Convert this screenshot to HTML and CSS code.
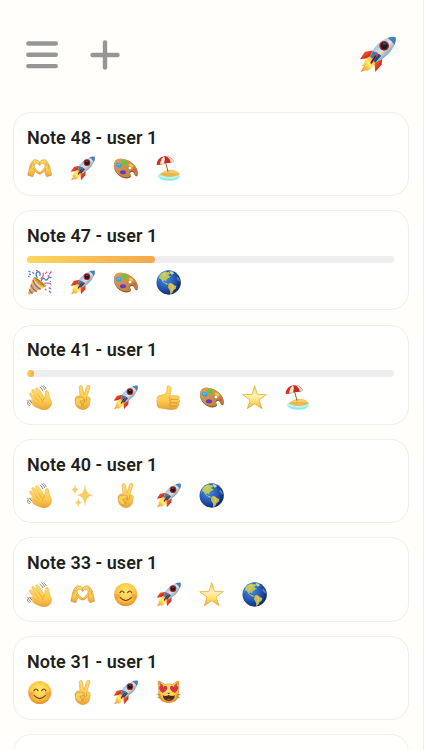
FILE: index.html
```html
<!DOCTYPE html>
<html lang="en">
<head>
<meta charset="utf-8">
<meta name="viewport" content="width=device-width, initial-scale=1">
<title>Notes</title>
<link rel="stylesheet" href="styles.css">
</head>
<body>
<svg class="sprite" width="0" height="0" aria-hidden="true">
  <defs>
    <linearGradient id="skin" x1="0" y1="0" x2="0" y2="1"><stop offset="0" stop-color="#ffdf66"/><stop offset=".6" stop-color="#fdcc50"/><stop offset="1" stop-color="#e9a237"/></linearGradient>
    <radialGradient id="face" cx=".5" cy=".38" r=".62"><stop offset="0" stop-color="#ffea72"/><stop offset=".65" stop-color="#fcc845"/><stop offset="1" stop-color="#e88b25"/></radialGradient>
    <linearGradient id="hull" x1="0" y1="0" x2="1" y2="1"><stop offset="0" stop-color="#3d78b8"/><stop offset=".3" stop-color="#9dc9ed"/><stop offset=".5" stop-color="#dce6e9"/><stop offset=".72" stop-color="#7796b4"/><stop offset="1" stop-color="#173d6c"/></linearGradient>
    <linearGradient id="fin" x1="0" y1="0" x2="1" y2="1"><stop offset="0" stop-color="#f77442"/><stop offset=".5" stop-color="#e33a20"/><stop offset="1" stop-color="#98190f"/></linearGradient>
    <linearGradient id="flame" x1="1" y1="0" x2="0" y2="1"><stop offset="0" stop-color="#f79a1e"/><stop offset=".45" stop-color="#fff06a"/><stop offset="1" stop-color="#f07c28"/></linearGradient>
    <radialGradient id="ocean" cx=".36" cy=".35" r=".66"><stop offset="0" stop-color="#4b8de0"/><stop offset=".6" stop-color="#2358b4"/><stop offset="1" stop-color="#122c70"/></radialGradient>
    <linearGradient id="gold" x1="0" y1="0" x2="0" y2="1"><stop offset="0" stop-color="#ffc843"/><stop offset=".4" stop-color="#fff3bb"/><stop offset=".7" stop-color="#ffdf6d"/><stop offset="1" stop-color="#f5a72c"/></linearGradient>
    <linearGradient id="wood" x1="0" y1="0" x2="1" y2="1"><stop offset="0" stop-color="#dca458"/><stop offset="1" stop-color="#bb7a3a"/></linearGradient>
  </defs>

  <symbol id="rocket" viewBox="0 0 75 75">
    <path d="M30 29 12 32 2 47 24 44Z" fill="url(#fin)"/>
    <path d="M47 46 46 58 33 73 31 54Z" fill="url(#fin)"/>
    <path d="M22 41 Q10 46 10 56 L5 61 10 61 3 73 15 69 15 72 27 65 34 51Z" fill="url(#flame)"/>
    <path d="M23 41 Q29 21 46 10 Q59 1 74 2 Q76 15 65 30 Q53 46 33 54Z" fill="url(#hull)"/>
    <path d="M58 4 Q66 1 74 2 Q76 9 72 18 Q66 9 58 4Z" fill="#487eb9"/>
    <path d="M28 31 23 43 28 46 38 34Z" fill="#3f7bb8"/>
    <path d="M40 36 45 40 33 54 29 49Z" fill="#244d7c"/>
    <path d="M38 35 24 56" stroke="#c4432b" stroke-width="4"/>
    <path d="M34 40 25 54" stroke="#4c211f" stroke-width="3"/>
    <circle cx="51" cy="20" r="10" fill="#c8261b"/>
    <circle cx="51" cy="20" r="7.3" fill="#141b26"/>
    <path d="M48 17 Q51 14 55 17" stroke="#67788a" stroke-width="2" fill="none"/>
    <path d="M39 34 48 35" stroke="#f3d16e" stroke-width="2"/>
  </symbol>

  <symbol id="hearthands" viewBox="0 0 75 75">
    <g id="half-heart">
      <path d="M3 53 Q7 43 7 34 Q10 22 18 14 Q22 9 28 12 Q35 12 38 19 L38 28 Q31 19 25 22 Q19 27 23 35 Q28 43 38 50 L38 54 Q31 53 26 48 L22 43 Q24 52 17 62 L3 58Z" fill="url(#skin)" stroke="#d58f30" stroke-width="1.9"/>
      <path d="M14 24 Q11 30 12 38M20 17 Q17 21 18 28M19 36 22 43" fill="none" stroke="#cf8930" stroke-width="1.8"/>
    </g>
    <use href="#half-heart" transform="matrix(-1 0 0 1 76 0)"/>
  </symbol>

  <symbol id="palette" viewBox="0 0 75 75">
    <path d="M4 21 Q8 7 28 9 Q50 12 64 28 Q76 41 74 57 Q73 62 68 60 Q65 59 63 52 Q59 43 52 50 Q49 53 53 57 Q57 65 45 67 Q27 69 12 53 Q-1 37 4 21Z" fill="#8a552a"/>
    <path d="M4 20 Q9 6 28 8 Q50 11 64 27 Q75 40 74 54 Q71 60 67 56 Q64 54 63 48 Q58 40 51 47 Q48 50 52 55 Q56 62 44 64 Q26 65 12 50 Q0 35 4 20Z" fill="url(#wood)"/>
    <circle cx="51" cy="36" r="5.5" fill="#fffefa" stroke="#774820" stroke-width="1"/>
    <ellipse cx="17" cy="28" rx="9" ry="7" fill="#38a3e3" transform="rotate(25 17 28)"/>
    <ellipse cx="33" cy="19" rx="8" ry="7" fill="#5fc440"/>
    <ellipse cx="54" cy="28" rx="8" ry="4" fill="#e8cf3a" transform="rotate(30 54 28)"/>
    <ellipse cx="30" cy="49" rx="9" ry="6" fill="#6c36c4"/>
    <ellipse cx="66" cy="43" rx="7" ry="3.5" fill="#e8544c" transform="rotate(45 66 43)"/>
    <path d="M12 27 Q16 23 21 27M29 18 32 16" stroke="#9bd6ec" stroke-width="2" fill="none"/>
  </symbol>

  <symbol id="beach" viewBox="0 0 75 75">
    <ellipse cx="39" cy="61" rx="34" ry="12" fill="#b6f4f0"/>
    <path d="M8 62 Q24 70 52 68 L70 62 Q65 74 40 74 Q15 74 8 62Z" fill="#8beaec"/>
    <path d="M10 55 Q24 43 43 41 Q64 42 72 55 Q58 63 37 63 Q21 62 10 55Z" fill="#edb64c"/>
    <path d="M17 51 Q31 43 47 43 Q63 46 68 53 Q47 48 17 51Z" fill="#f6cf6f"/>
    <path d="M27 12 36 47" stroke="#8f622e" stroke-width="3"/>
    <path d="M2 27 Q3 4 25 1 Q46 -2 54 17 L42 20 29 21 15 26Z" fill="#d82e29"/>
    <path d="M13 26 Q13 8 25 1 Q28 8 25 22Z" fill="#fff3d7"/>
    <path d="M29 1 Q41 5 44 19 L54 17 Q46 1 29 1Z" fill="#e9dcc5"/>
    <path d="M25 1 Q38 6 44 20 L25 22 Q30 9 25 1Z" fill="#c92624"/>
  </symbol>

  <symbol id="party" viewBox="0 0 75 75">
    <path d="M20 21 3 70 Q5 76 11 73 L57 48Z" fill="#e9b740"/>
    <path d="M21 25 16 38 Q25 53 39 58 L49 53 Q29 42 21 25Z" fill="#f6d269"/>
    <path d="M18 30 Q22 48 41 58M12 44 Q16 58 29 65M7 58 Q8 65 17 70" fill="none" stroke="#8a5fc4" stroke-width="4"/>
    <path d="M20 20 Q36 25 58 47 Q54 53 44 47 Q25 39 20 20Z" fill="#d39a3c"/>
    <path d="M25 24 Q42 35 50 47" stroke="#9a6a32" stroke-width="3" fill="none"/>
    <path d="M31 24 Q22 9 34 5 Q42 8 38 18M43 33 Q45 20 53 27 Q58 35 63 25 Q67 20 73 24" fill="none" stroke="#4776c9" stroke-width="4"/>
    <path d="M41 27 Q52 17 48 8M52 40 Q64 37 73 43M60 5 55 12M67 13 73 4" fill="none" stroke="#df4b84" stroke-width="3.5"/>
    <path d="M3 3 11 6M6 12 12 14M16 6 21 12M65 53 73 57" stroke="#5792d6" stroke-width="4"/>
    <path d="M3 19 8 20M27 2 32 1M62 16 67 19M66 63 72 68M54 57 58 60" stroke="#d9499a" stroke-width="4"/>
    <circle cx="47" cy="22" r="2" fill="#efa236"/><circle cx="70" cy="34" r="2" fill="#bc4fc3"/>
  </symbol>

  <symbol id="globe" viewBox="0 0 75 75">
    <circle cx="38" cy="37.5" r="36.5" fill="url(#ocean)"/>
    <path d="M10 17 Q16 8 28 4 L34 7 39 5 43 11 37 14 39 18 45 19 39 23 34 26 30 30 31 35 25 31 21 34 27 39 33 40 37 43 32 44 21 37 15 28 9 25Z" fill="#b9c75b"/>
    <path d="M37 42 43 38 51 42 53 45 61 48 59 56 53 60 49 68 43 73 42 62 36 52Z" fill="#c6bb55"/>
    <path d="M41 3 52 5 53 11 47 14 42 9Z" fill="#c9d3a0"/>
    <path d="M64 20 70 27 72 35 66 31 61 25Z" fill="#5c86a8"/>
    <path d="M16 15 26 9 29 13 20 22M43 43 51 48 46 61" stroke="#e1d36f" stroke-width="3" fill="none"/>
    <path d="M7 33 Q6 18 18 10" stroke="#8bb7ec" stroke-width="2" fill="none" opacity=".5"/>
  </symbol>

  <symbol id="wave" viewBox="0 0 75 75">
    <path d="M20 63 11 49 Q9 44 14 44 L22 50 8 29 Q6 24 11 23 L15 26 29 42 15 20 Q13 14 18 13 L23 17 38 36 26 14 Q25 8 31 8 L36 13 53 38 55 23 Q55 17 60 16 Q65 17 65 24 Q66 38 73 48 Q77 62 64 71 Q52 78 38 71 Q28 68 20 63Z" fill="url(#skin)" stroke="#dfa03a" stroke-width="1.3"/>
    <path d="M22 50 30 58M29 42 37 52M38 36 45 46M53 39 Q45 45 47 55" fill="none" stroke="#d89128" stroke-width="1.7"/>
    <path d="M43 2 Q51 6 53 15M49 1 Q56 6 58 12M38 6 Q45 10 48 18M2 45 Q4 54 12 59M0 51 Q2 59 8 63M7 44 Q9 50 15 54" fill="none" stroke="#555" stroke-width="2"/>
  </symbol>

  <symbol id="victory" viewBox="0 0 75 75">
    <path d="M15 42 Q14 60 22 67 Q29 74 39 74 Q54 73 58 61 L61 44 Q62 36 53 35 L51 34 60 7 Q61 1 56 1 Q51 0 49 7 L42 29 37 5 Q35 0 30 2 Q26 4 28 10 L30 33 Q18 31 15 42Z" fill="url(#skin)" stroke="#d6943a" stroke-width="1.4"/>
    <path d="M16 48 Q15 40 22 37 L34 36 Q43 36 43 42 Q43 47 35 48 L29 49 34 57 Q36 62 32 65 Q29 67 25 62" fill="#fbd056" stroke="#c5832c" stroke-width="1.7"/>
    <path d="M43 42 Q45 50 40 55 Q38 59 39 64M50 36 50 47 Q47 53 42 49" fill="none" stroke="#ca8529" stroke-width="1.7"/>
  </symbol>

  <symbol id="thumb" viewBox="0 0 75 75">
    <path d="M3 40 Q4 32 13 31 L28 27 Q34 18 33 7 Q33 1 39 2 Q47 4 45 18 L42 32 63 32 Q71 32 71 38 Q70 42 66 43 Q73 44 71 51 Q70 54 66 54 Q72 56 68 62 Q66 64 63 64 Q67 69 60 72 Q45 77 27 71 L9 69 Q1 66 3 40Z" fill="url(#skin)" stroke="#da9327" stroke-width="1.3"/>
    <path d="M43 34 Q37 39 42 43 L66 43M45 44 Q38 49 43 53 L66 54M44 54 Q38 59 43 63L63 64M44 65 Q41 69 45 72" fill="none" stroke="#cc8726" stroke-width="2"/>
  </symbol>

  <symbol id="star" viewBox="0 0 75 75">
    <path d="M38 2 46 28 73 29 51 45 60 71 38 56 16 71 24 45 2 29 30 28Z" fill="url(#gold)" stroke="#e9ae39" stroke-width="2.4" stroke-linejoin="round"/>
  </symbol>

  <symbol id="sparkles" viewBox="0 0 75 75">
    <path d="M45 4 Q46 34 68 37 Q47 40 45 70 Q43 40 22 37 Q44 34 45 4ZM15 4 Q16 19 25 20 Q16 21 15 35 Q14 21 4 20 Q14 19 15 4ZM25 45 Q26 58 35 59 Q26 60 25 73 Q24 60 15 59 Q24 58 25 45Z" fill="#fbcc62" stroke="#fbcc62" stroke-width=".6"/>
  </symbol>

  <symbol id="smile" viewBox="0 0 75 75">
    <circle cx="38" cy="37.5" r="34.5" fill="url(#face)"/>
    <circle cx="14" cy="43" r="8" fill="#f39045" opacity=".6"/><circle cx="62" cy="43" r="8" fill="#f39045" opacity=".6"/>
    <path d="M21 32 Q27 22 33 32M44 32 Q50 22 56 32M22 47 Q38 65 55 47" fill="none" stroke="#70401b" stroke-width="3.5" stroke-linecap="round"/>
  </symbol>

  <symbol id="cat" viewBox="0 0 75 75">
    <path d="M8 31 6 6 Q7 2 12 4 L26 13 Q38 9 50 13 L64 3 Q69 2 69 8 L68 31 Q74 62 46 67 Q38 70 29 67 Q2 61 8 31Z" fill="url(#face)" stroke="#cc812d" stroke-width="1.3"/>
    <path d="M11 9 13 22 23 16ZM64 9 62 22 53 16Z" fill="#b46b35"/>
    <path id="heart-eye" d="M19 39 Q4 24 12 18 Q18 14 22 21 Q31 13 34 22 Q36 32 19 39Z" fill="#dd3141"/>
    <use href="#heart-eye" transform="matrix(-1 0 0 1 76 0)"/>
    <path d="M33 38 H43 L38 43Z" fill="#704128"/>
    <path d="M20 46 Q29 50 38 45 Q47 50 57 46 Q54 63 38 63 Q23 63 20 46Z" fill="#4b2b1d"/>
    <path d="M31 58 Q38 54 46 58 Q38 63 31 58Z" fill="#c9504b"/>
    <path d="M2 43 15 45M3 54 15 50M73 43 61 45M73 54 61 50" stroke="#826039" stroke-width="1.5"/>
  </symbol>
</svg>

<div class="screen">
  <header class="topbar">
    <svg class="menu" viewBox="0 0 32 28"><path d="M2.3 2.5H29.8M2.3 13.8H29.8M2.3 25.1H29.8"/></svg>
    <svg class="add" viewBox="0 0 30 30"><path d="M15 2.5V27.5M2.5 15H27.5"/></svg>
    <svg class="avatar"><use href="#rocket"/></svg>
  </header>
  <main class="notes">
    <article class="note">
      <h2>Note 48 - user 1</h2>
      <div class="reactions"><svg><use href="#hearthands"/></svg><svg><use href="#rocket"/></svg><svg><use href="#palette"/></svg><svg><use href="#beach"/></svg></div>
    </article>
    <article class="note">
      <h2>Note 47 - user 1</h2>
      <div class="progress"><div class="fill" style="width:35%"></div></div>
      <div class="reactions"><svg><use href="#party"/></svg><svg><use href="#rocket"/></svg><svg><use href="#palette"/></svg><svg><use href="#globe"/></svg></div>
    </article>
    <article class="note">
      <h2>Note 41 - user 1</h2>
      <div class="progress"><div class="fill" style="width:2%"></div></div>
      <div class="reactions"><svg><use href="#wave"/></svg><svg><use href="#victory"/></svg><svg><use href="#rocket"/></svg><svg><use href="#thumb"/></svg><svg><use href="#palette"/></svg><svg><use href="#star"/></svg><svg><use href="#beach"/></svg></div>
    </article>
    <article class="note">
      <h2>Note 40 - user 1</h2>
      <div class="reactions"><svg><use href="#wave"/></svg><svg><use href="#sparkles"/></svg><svg><use href="#victory"/></svg><svg><use href="#rocket"/></svg><svg><use href="#globe"/></svg></div>
    </article>
    <article class="note">
      <h2>Note 33 - user 1</h2>
      <div class="reactions"><svg><use href="#wave"/></svg><svg><use href="#hearthands"/></svg><svg><use href="#smile"/></svg><svg><use href="#rocket"/></svg><svg><use href="#star"/></svg><svg><use href="#globe"/></svg></div>
    </article>
    <article class="note">
      <h2>Note 31 - user 1</h2>
      <div class="reactions"><svg><use href="#smile"/></svg><svg><use href="#victory"/></svg><svg><use href="#rocket"/></svg><svg><use href="#cat"/></svg></div>
    </article>
    <article class="note"></article>
  </main>
</div>
</body>
</html>
```
FILE: styles.css
```css
* {
  box-sizing: border-box;
}

body {
  margin: 0;
  background: #fffefa;
  color: #1f1f20;
  font-family: Roboto, "Liberation Sans", sans-serif;
}

.sprite {
  position: absolute;
}

.screen {
  height: 750px;
  overflow: hidden;
  border-right: 1px solid #efebef;
}

.topbar {
  display: flex;
  align-items: center;
  height: 111.8px;
  padding: 0 27px 0 25.5px;
}

.menu,
.add {
  fill: none;
  stroke: #969696;
  stroke-width: 4.4px;
  stroke-linecap: round;
}

.menu {
  width: 32px;
  height: 28px;
  margin-bottom: 1px;
}

.add {
  width: 30px;
  height: 30px;
  margin: 0 0 1px 32.5px;
}

.avatar {
  width: 37px;
  height: 37px;
  margin: 0 0 3px auto;
}

.notes {
  display: flex;
  flex-direction: column;
  gap: 14.2px;
  padding: 0 14px 0 12.5px;
}

.note {
  flex: none;
  height: 84.3px;
  padding: 13.8px 14px 0 13.5px;
  border: 1px solid #eeeef1;
  border-radius: 18px;
  background: #fffffe;
}

.note:has(.progress) {
  height: 100.1px;
}

.note h2 {
  margin: 0;
  font-size: 18px;
  line-height: 22px;
  font-weight: 600;
  letter-spacing: 0.05px;
  white-space: nowrap;
}

.progress {
  height: 7px;
  margin-top: 8.8px;
  border-radius: 4px;
  background: #eeeeee;
}

.fill {
  height: 7px;
  border-radius: 4px;
  background: linear-gradient(90deg, #fbd65d, #f4a84c);
}

.reactions {
  display: flex;
  gap: 18px;
  margin-top: 7.8px;
}

.progress + .reactions {
  margin-top: 7.6px;
}

.reactions svg {
  width: 25px;
  height: 25px;
}
```
